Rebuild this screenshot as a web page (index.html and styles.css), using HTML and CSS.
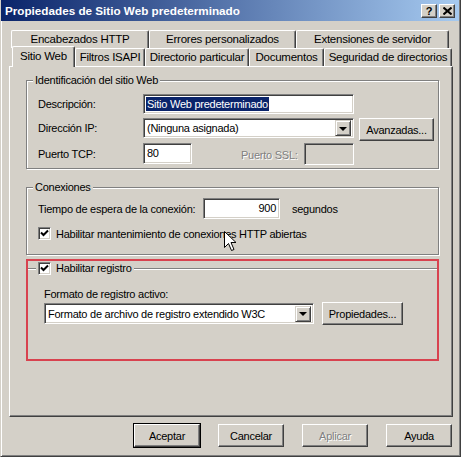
FILE: index.html
```html
<!DOCTYPE html>
<html lang="es">
<head>
<meta charset="utf-8">
<title>Propiedades de Sitio Web predeterminado</title>
<link rel="stylesheet" href="styles.css">
</head>
<body>
<div class="window">
  <div class="titlebar">
    <span class="title">Propiedades de Sitio Web predeterminado</span>
    <div class="tbtns">
      <span class="tbtn">?</span>
      <span class="tbtn tbtn-x">
        <svg width="9" height="8" viewBox="0 0 9 8"><path d="M0.5 0.5 L8.5 7.5 M8.5 0.5 L0.5 7.5" stroke="#000" stroke-width="2"/></svg>
      </span>
    </div>
  </div>
  <div class="client">
    <div class="tabs">
      <div class="tabrow row1">
        <div class="tab w-enc">Encabezados HTTP</div>
        <div class="tab w-err">Errores personalizados</div>
        <div class="tab w-ext">Extensiones de servidor</div>
      </div>
      <div class="tabrow row2">
        <div class="tab w-sit selected">Sitio Web</div>
        <div class="tab w-fil">Filtros ISAPI</div>
        <div class="tab w-dir">Directorio particular</div>
        <div class="tab w-doc">Documentos</div>
        <div class="tab w-seg">Seguridad de directorios</div>
      </div>
    </div>
    <div class="panel">
      <div class="group g1">
        <div class="legend">Identificación del sitio Web</div>
        <div class="row r1">
          <span class="lbl">Descripción:</span>
          <div class="field f-desc"><span class="sel">Sitio Web predeterminado</span></div>
        </div>
        <div class="row r2">
          <span class="lbl">Dirección IP:</span>
          <div class="field combo f-ip"><span class="ctext">(Ninguna asignada)</span><span class="dd"><span class="tri"></span></span></div>
          <div class="btn b-av">Avanzadas...</div>
        </div>
        <div class="row r3">
          <span class="lbl">Puerto TCP:</span>
          <div class="field f-tcp">80</div>
          <span class="lbl-ssl disabled">Puerto SSL:</span>
          <div class="field f-ssl blank"></div>
        </div>
      </div>
      <div class="group g2">
        <div class="legend">Conexiones</div>
        <div class="row r4">
          <span class="lbl-t">Tiempo de espera de la conexión:</span>
          <div class="field f-time">900</div>
          <span class="unit">segundos</span>
        </div>
        <div class="row r5">
          <span class="chk"><svg width="9" height="9" viewBox="0 0 9 9"><path d="M1 3.5 L3.5 6 L8 1.5" stroke="#000" stroke-width="2" fill="none"/></svg></span>
          <span class="chklbl">Habilitar mantenimiento de conexiones HTTP abiertas</span>
        </div>
      </div>
      <div class="highlight">
        <div class="group g3">
          <div class="legend chklegend">
            <span class="chk"><svg width="9" height="9" viewBox="0 0 9 9"><path d="M1 3.5 L3.5 6 L8 1.5" stroke="#000" stroke-width="2" fill="none"/></svg></span>
            <span class="chklbl">Habilitar registro</span>
          </div>
          <div class="fmt-lbl">Formato de registro activo:</div>
          <div class="row r6">
            <div class="field combo f-fmt"><span class="ctext">Formato de archivo de registro extendido W3C</span><span class="dd"><span class="tri"></span></span></div>
            <div class="btn b-prop">Propiedades...</div>
          </div>
        </div>
      </div>
      <svg class="cursor" width="13" height="21" viewBox="0 0 13 21"><path d="M0.5 0.5 L0.5 16.5 L4.5 12.5 L7.5 19.5 L10 18.5 L7 11.5 L12 11.5 Z" fill="#fff" stroke="#000" stroke-width="1"/></svg>
    </div>
    <div class="buttons">
      <div class="btn dlg default">Aceptar</div>
      <div class="btn dlg">Cancelar</div>
      <div class="btn dlg disabled">Aplicar</div>
      <div class="btn dlg">Ayuda</div>
    </div>
  </div>
</div>
</body>
</html>
```
FILE: styles.css
```css
html, body {
  margin: 0;
  padding: 0;
  background: #d4d0c8;
}
.window {
  width: 461px;
  height: 457px;
  box-sizing: border-box;
  background: #d4d0c8;
  border-left: 1px solid #d4d0c8;
  border-right: 1px solid #404040;
  border-bottom: 1px solid #404040;
  box-shadow: inset 1px 0 #fff, inset -1px -1px #808080;
  font-family: "Liberation Sans", Arial, sans-serif;
  font-size: 11px;
  letter-spacing: -0.25px;
  color: #000;
  overflow: hidden;
  position: relative;
}
.titlebar {
  height: 21px;
  margin: 0 1px 0 0;
  background: linear-gradient(to right, #0a246a, #a6caf0);
  display: flex;
  align-items: center;
  justify-content: space-between;
  padding: 0 4px 0 4px;
}
.title {
  color: #fff;
  font-weight: bold;
  font-size: 11.7px;
  letter-spacing: 0;
}
.tbtns {
  display: flex;
  gap: 2px;
}
.tbtn {
  width: 16px;
  height: 14px;
  box-sizing: border-box;
  background: #d4d0c8;
  border: 1px solid;
  border-color: #fff #404040 #404040 #fff;
  box-shadow: inset -1px -1px #808080;
  font-weight: bold;
  font-size: 11px;
  line-height: 12px;
  text-align: center;
  display: flex;
  align-items: center;
  justify-content: center;
}
.client {
  padding: 0 8px 0 7px;
}
.tabs {
  padding-top: 9px;
}
.tabrow {
  display: flex;
  height: 18px;
}
.row1 {
  padding-left: 3px;
}
.row2 {
  padding-left: 6px;
}
.tab {
  box-sizing: border-box;
  height: 18px;
  border-left: 1px solid #fff;
  border-top: 1px solid #fff;
  border-right: 1px solid #404040;
  box-shadow: inset -1px 0 #808080;
  border-radius: 2px 2px 0 0;
  text-align: center;
  line-height: 17px;
  white-space: nowrap;
  font-size: 11.5px;
}
.w-enc { width: 138px; }
.w-err { width: 147px; }
.w-ext { width: 153px; }
.w-sit { width: 60px; }
.w-fil { width: 70px; }
.w-dir { width: 104px; }
.w-doc { width: 75px; }
.w-seg { width: 128px; }
.tab.selected {
  height: 21px;
  margin: -2px 0 -1px -2px;
  width: 63px;
  background: #d4d0c8;
  position: relative;
  z-index: 2;
  line-height: 18px;
}
.panel {
  position: relative;
  box-sizing: border-box;
  height: 351px;
  width: 444px;
  margin-left: 1px;
  border-left: 1px solid #fff;
  border-top: 1px solid #fff;
  border-right: 1px solid #404040;
  border-bottom: 1px solid #404040;
  box-shadow: inset -1px -1px #808080;
  padding: 0 13px 0 16px;
}
.group {
  box-sizing: border-box;
  border: 1px solid #808080;
  box-shadow: inset 1px 1px #fff, 1px 1px #fff;
}
.legend {
  display: flex;
  align-items: center;
  width: max-content;
  margin: -7px 0 0 6px;
  padding: 0 2px;
  height: 13px;
  line-height: 13px;
  background: #d4d0c8;
  position: relative;
}
.g1 {
  margin-top: 13px;
  height: 89px;
}
.row {
  display: flex;
  align-items: center;
  height: 20px;
  padding-left: 11px;
}
.r1 { margin-top: 7px; }
.r2 { margin-top: 4px; }
.r3 { margin-top: 5px; height: 21px; }
.lbl {
  width: 105px;
  flex: none;
}
.field {
  box-sizing: border-box;
  height: 20px;
  background: #fff;
  border: 1px solid;
  border-color: #808080 #fff #fff #808080;
  box-shadow: inset 1px 1px #404040, inset -1px -1px #d4d0c8;
  padding: 0 3px;
  line-height: 18px;
  white-space: nowrap;
  overflow: hidden;
  flex: none;
}
.f-desc {
  width: 211px;
  padding-left: 2px;
}
.sel {
  background: #0a246a;
  color: #fff;
  display: inline-block;
  line-height: 14px;
  padding: 0 1px;
}
.combo {
  display: flex;
  align-items: center;
  justify-content: space-between;
  padding: 0 2px 0 3px;
}
.f-ip { width: 211px; }
.dd {
  box-sizing: border-box;
  width: 16px;
  height: 16px;
  background: #d4d0c8;
  border: 1px solid;
  border-color: #d4d0c8 #404040 #404040 #d4d0c8;
  box-shadow: inset 1px 1px #fff, inset -1px -1px #808080;
  display: flex;
  align-items: center;
  justify-content: center;
}
.tri {
  width: 0;
  height: 0;
  border-left: 4px solid transparent;
  border-right: 4px solid transparent;
  border-top: 4px solid #000;
  margin-top: 1px;
}
.btn {
  box-sizing: border-box;
  height: 23px;
  background: #d4d0c8;
  border: 1px solid;
  border-color: #fff #404040 #404040 #fff;
  box-shadow: inset -1px -1px #808080;
  display: flex;
  align-items: center;
  justify-content: center;
  white-space: nowrap;
  flex: none;
}
.b-av {
  width: 75px;
  margin-left: 5px;
  align-self: flex-start;
}
.f-tcp {
  width: 49px;
  height: 21px;
}
.lbl-ssl {
  margin-left: 49px;
  width: 63px;
  margin-top: 3px;
}
.f-ssl {
  width: 50px;
  height: 22px;
  background: #d4d0c8;
  margin-top: 1px;
}
.disabled {
  color: #808080;
  text-shadow: 1px 1px #fff;
}
.g2 {
  margin-top: 18px;
  height: 68px;
}
.r4 {
  margin-top: 4px;
  height: 21px;
}
.lbl-t {
  width: 165px;
  flex: none;
  white-space: nowrap;
}
.f-time {
  width: 77px;
  height: 21px;
  text-align: right;
  padding-right: 3px;
}
.unit {
  margin-left: 12px;
}
.r5 {
  margin-top: 8px;
  height: 13px;
}
.chk {
  box-sizing: border-box;
  width: 13px;
  height: 13px;
  background: #fff;
  border: 1px solid;
  border-color: #808080 #fff #fff #808080;
  box-shadow: inset 1px 1px #404040, inset -1px -1px #d4d0c8;
  display: inline-flex;
  align-items: center;
  justify-content: center;
  flex: none;
}
.chklbl {
  margin-left: 5px;
  white-space: nowrap;
}
.highlight {
  margin-top: 4px;
  height: 102px;
  box-sizing: border-box;
  border: 2px solid #d8424f;
}
.g3 {
  margin-top: 7px;
  border: none;
  border-top: 1px solid #808080;
  box-shadow: inset 0 1px #fff;
  height: 90px;
}
.chklegend {
  margin-left: 8px;
  padding: 0 2px;
}
.fmt-lbl {
  margin: 13px 0 0 16px;
  height: 13px;
  line-height: 13px;
}
.r6 {
  margin-top: 1px;
  padding-left: 16px;
  height: 23px;
}
.f-fmt {
  width: 270px;
  height: 21px;
}
.b-prop {
  width: 81px;
  margin-left: 8px;
}
.cursor {
  position: absolute;
  left: 214px;
  top: 164px;
}
.buttons {
  display: flex;
  justify-content: flex-end;
  gap: 18px;
  margin-top: 7px;
}
.dlg {
  width: 66px;
  height: 23px;
}
.default {
  outline: 1px solid #000;
}
```
